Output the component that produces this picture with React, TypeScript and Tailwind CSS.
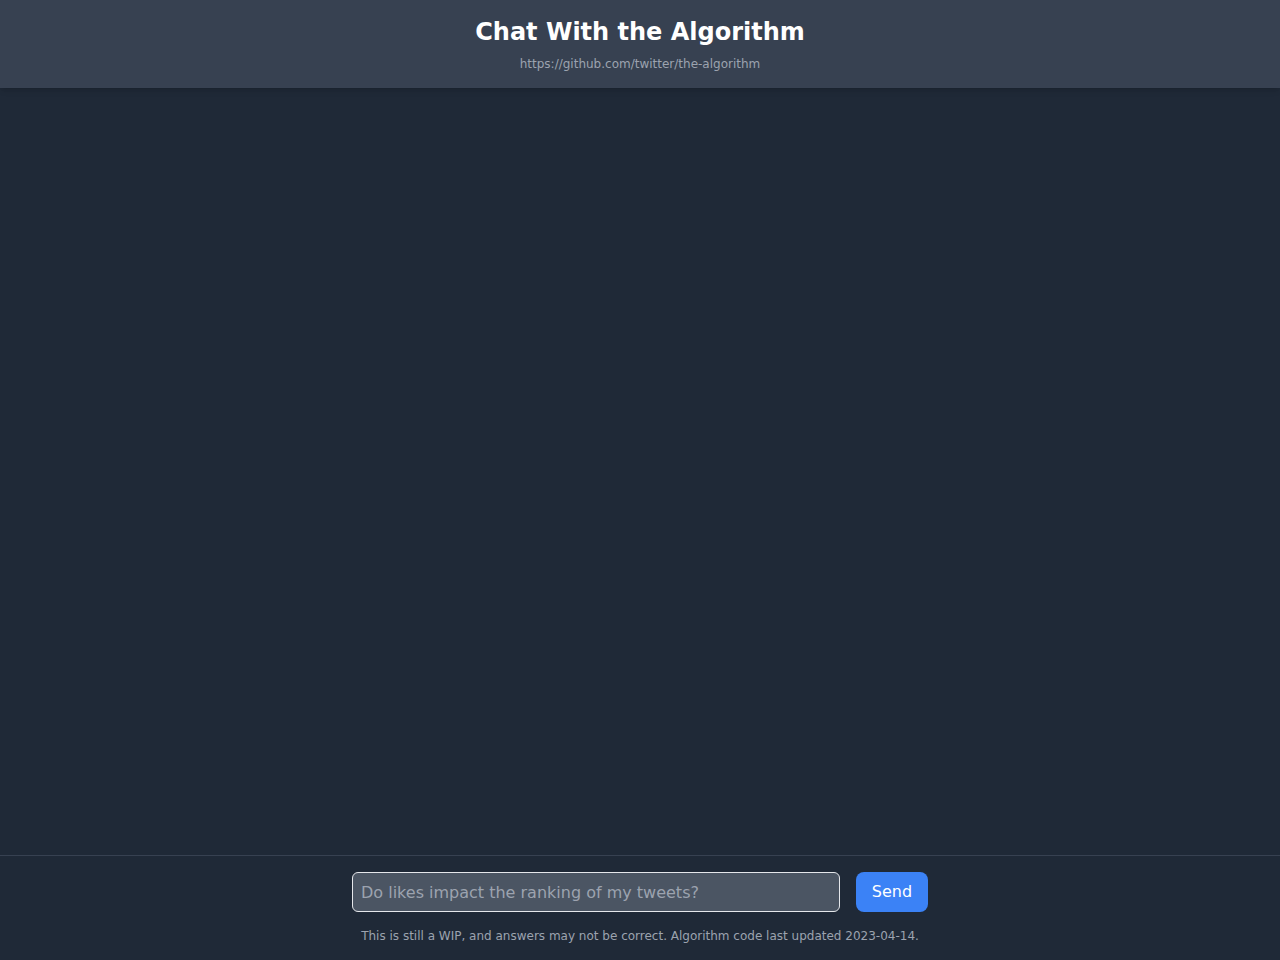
import { useState } from "react";

export default function App() {
  const [question, setQuestion] = useState("");

  return (
    <div
      className="flex flex-col h-screen bg-[#1f2937] text-white"
      style={{ fontFamily: '"DejaVu Sans", sans-serif' }}
    >
      {/* Header */}
      <header className="flex flex-col items-center py-4 bg-[#374151] shadow-md">
        <h1 className="text-2xl font-bold leading-8">Chat With the Algorithm</h1>
        <a
          href="https://github.com/twitter/the-algorithm"
          className="mt-2 text-xs leading-4 text-[#9ca3af]"
        >
          https://github.com/twitter/the-algorithm
        </a>
      </header>

      {/* Messages */}
      <main className="flex-1 overflow-y-auto" />

      {/* Input */}
      <footer className="border-t border-[#374151] px-4 pt-4 pb-4">
        <form
          onSubmit={(e) => e.preventDefault()}
          className="flex gap-4 max-w-xl mx-auto"
        >
          <input
            type="text"
            value={question}
            onChange={(e) => setQuestion(e.target.value)}
            placeholder="Do likes impact the ranking of my tweets?"
            className="flex-1 h-10 px-2 rounded-md bg-[#4b5563] border border-[#e5e7eb] text-base text-white placeholder-[#9ca3af] focus:outline-none"
          />
          <button
            type="submit"
            className="w-[72px] h-10 rounded-lg bg-[#3b82f6] text-base text-white"
          >
            Send
          </button>
        </form>
        <p className="mt-4 text-xs leading-4 text-center text-[#9ca3af]">
          This is still a WIP, and answers may not be correct. Algorithm code last
          updated 2023-04-14.
        </p>
      </footer>
    </div>
  );
}
